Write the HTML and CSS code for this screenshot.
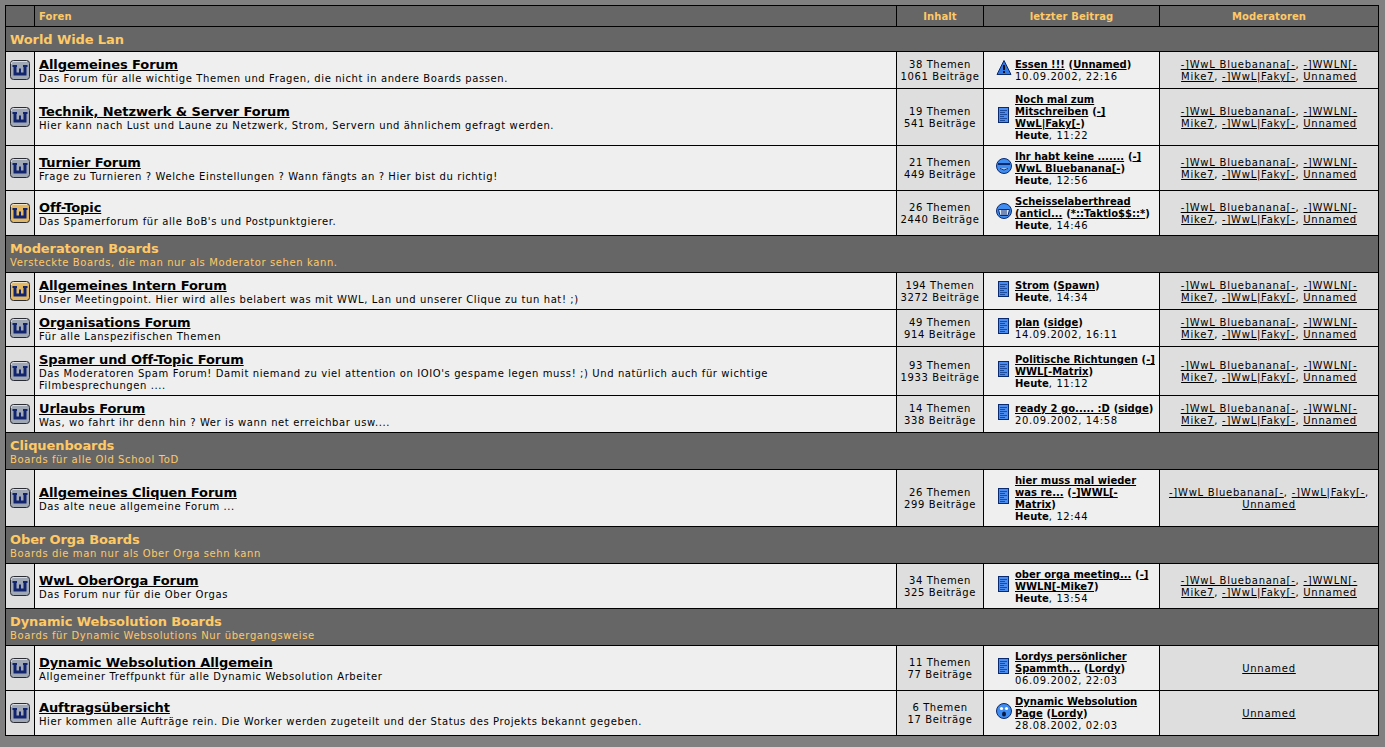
FILE: index.html
```html
<!DOCTYPE html>
<html lang="de">
<head>
  <meta charset="UTF-8" />
  <title>Foren</title>
  <meta name="viewport" content="width=device-width, initial-scale=1.0" />
  <link rel="stylesheet" href="styles.css">
</head>
<body>

  <svg class="sprites" width="0" height="0">
    <symbol id="forum-icon" viewBox="0 0 20 20">
      <rect x="0.5" y="0.5" width="19" height="19" rx="3" fill="currentColor" stroke="#2b2b33" />
      <path d="M1.5 4V2.5L3 1.5H17" fill="none" stroke="#fff" stroke-opacity=".6" />
      <path d="M2.5 5H7V7H6.5V12.5H9V8.5H11V12.5H13.5V7H13V5H17.5V7H16.5V15.5H3.5V7H2.5Z" fill="#12246e" />
    </symbol>
    <symbol id="post-doc" viewBox="-4 -1 18 18">
      <rect x="0.5" y="0.5" width="10" height="15" fill="#4a8cf0" stroke="#0a2a70" />
      <path d="M2 3.5H9M2 5.5H7M2 7.5H9M2 9.5H6M2 11.5H9M2 13.5H7" stroke="#1c4a9c" />
    </symbol>
    <symbol id="post-warn" viewBox="-1 0 18 18">
      <path d="M9 1.5L16 15.5H2Z" fill="#2f78e8" stroke="#0a2a70" stroke-linejoin="round" />
      <path d="M9 6V11" stroke="#111" stroke-width="2" />
      <rect x="8" y="12" width="2" height="2" fill="#111" />
    </symbol>
    <symbol id="post-sad" viewBox="-1 0 18 18">
      <circle cx="9" cy="9" r="7.5" fill="#3f8df0" stroke="#0a2a70" />
      <path d="M3 7H15" stroke="#0a2a70" stroke-width="2" />
      <path d="M5 11.5Q9 14.5 13 11.5" fill="#fff" stroke="#0a2a70" />
    </symbol>
    <symbol id="post-grin" viewBox="-1 0 18 18">
      <circle cx="9" cy="9" r="7.5" fill="#3f8df0" stroke="#0a2a70" />
      <path d="M3.5 7.5H14.5L13 13.5H5Z" fill="#dfe9f8" stroke="#0a2a70" />
      <path d="M7 7.5V13.5M9 7.5V13.5M11 7.5V13.5" stroke="#0a2a70" />
    </symbol>
    <symbol id="post-wow" viewBox="-1 0 18 18">
      <circle cx="9" cy="9" r="7.5" fill="#3f8df0" stroke="#0a2a70" />
      <circle cx="6.5" cy="6.5" r="1.6" fill="#fff" />
      <circle cx="11.5" cy="6.5" r="1.6" fill="#fff" />
      <ellipse cx="9" cy="12" rx="2" ry="2.6" fill="#0a1a40" />
    </symbol>
  </svg>

  <table class="board">
    <colgroup>
      <col class="col-icon" />
      <col class="col-forum" />
      <col class="col-count" />
      <col class="col-last" />
      <col />
    </colgroup>
    <thead>
      <tr>
        <th></th>
        <th class="left">Foren</th>
        <th>Inhalt</th>
        <th>letzter Beitrag</th>
        <th>Moderatoren</th>
      </tr>
    </thead>
    <tbody>
      <tr class="cat"><td colspan="5"><b>World Wide Lan</b></td></tr>

      <tr>
        <td class="icon"><svg class="ficon"><use href="#forum-icon" /></svg></td>
        <td class="forum"><a href="#">Allgemeines Forum</a><br />Das Forum für alle wichtige Themen und Fragen, die nicht in andere Boards passen.</td>
        <td class="count">38 Themen<br />1061 Beiträge</td>
        <td class="last"><div class="post"><svg class="picon"><use href="#post-warn" /></svg><div><a href="#"><b>Essen !!!</b></a> <b>(<a href="#">Unnamed</a>)</b><br />10.09.2002, 22:16</div></div></td>
        <td class="mods"><a href="#">-]WwL Bluebanana[-</a>, <a href="#">-]WWLN[-Mike7</a>, <a href="#">-]WwL|Faky[-</a>, <a href="#">Unnamed</a></td>
      </tr>
      <tr>
        <td class="icon"><svg class="ficon"><use href="#forum-icon" /></svg></td>
        <td class="forum"><a href="#">Technik, Netzwerk &amp; Server Forum</a><br />Hier kann nach Lust und Laune zu Netzwerk, Strom, Servern und ähnlichem gefragt werden.</td>
        <td class="count">19 Themen<br />541 Beiträge</td>
        <td class="last"><div class="post"><svg class="picon"><use href="#post-doc" /></svg><div><a href="#"><b>Noch mal zum Mitschreiben</b></a> <b>(<a href="#">-]<wbr />WwL|Faky[-</a>)</b><br /><b>Heute</b>, 11:22</div></div></td>
        <td class="mods"><a href="#">-]WwL Bluebanana[-</a>, <a href="#">-]WWLN[-Mike7</a>, <a href="#">-]WwL|Faky[-</a>, <a href="#">Unnamed</a></td>
      </tr>
      <tr>
        <td class="icon"><svg class="ficon"><use href="#forum-icon" /></svg></td>
        <td class="forum"><a href="#">Turnier Forum</a><br />Frage zu Turnieren ? Welche Einstellungen ? Wann fängts an ? Hier bist du richtig!</td>
        <td class="count">21 Themen<br />449 Beiträge</td>
        <td class="last"><div class="post"><svg class="picon"><use href="#post-sad" /></svg><div><a href="#"><b>Ihr habt keine .......</b></a> <b>(<a href="#">-]<wbr />WwL Bluebanana[-</a>)</b><br /><b>Heute</b>, 12:56</div></div></td>
        <td class="mods"><a href="#">-]WwL Bluebanana[-</a>, <a href="#">-]WWLN[-Mike7</a>, <a href="#">-]WwL|Faky[-</a>, <a href="#">Unnamed</a></td>
      </tr>
      <tr>
        <td class="icon"><svg class="ficon new"><use href="#forum-icon" /></svg></td>
        <td class="forum"><a href="#">Off-Topic</a><br />Das Spamerforum für alle BoB's und Postpunktgierer.</td>
        <td class="count">26 Themen<br />2440 Beiträge</td>
        <td class="last"><div class="post"><svg class="picon"><use href="#post-grin" /></svg><div><a href="#"><b>Scheisselaberthread (anticl...</b></a> <b>(<a href="#">*::Taktlo$$::*</a>)</b><br /><b>Heute</b>, 14:46</div></div></td>
        <td class="mods"><a href="#">-]WwL Bluebanana[-</a>, <a href="#">-]WWLN[-Mike7</a>, <a href="#">-]WwL|Faky[-</a>, <a href="#">Unnamed</a></td>
      </tr>

      <tr class="cat"><td colspan="5"><b>Moderatoren Boards</b><br />Versteckte Boards, die man nur als Moderator sehen kann.</td></tr>

      <tr>
        <td class="icon"><svg class="ficon new"><use href="#forum-icon" /></svg></td>
        <td class="forum"><a href="#">Allgemeines Intern Forum</a><br />Unser Meetingpoint. Hier wird alles belabert was mit WWL, Lan und unserer Clique zu tun hat! ;)</td>
        <td class="count">194 Themen<br />3272 Beiträge</td>
        <td class="last"><div class="post"><svg class="picon"><use href="#post-doc" /></svg><div><a href="#"><b>Strom</b></a> <b>(<a href="#">Spawn</a>)</b><br /><b>Heute</b>, 14:34</div></div></td>
        <td class="mods"><a href="#">-]WwL Bluebanana[-</a>, <a href="#">-]WWLN[-Mike7</a>, <a href="#">-]WwL|Faky[-</a>, <a href="#">Unnamed</a></td>
      </tr>
      <tr>
        <td class="icon"><svg class="ficon"><use href="#forum-icon" /></svg></td>
        <td class="forum"><a href="#">Organisations Forum</a><br />Für alle Lanspezifischen Themen</td>
        <td class="count">49 Themen<br />914 Beiträge</td>
        <td class="last"><div class="post"><svg class="picon"><use href="#post-doc" /></svg><div><a href="#"><b>plan</b></a> <b>(<a href="#">sidge</a>)</b><br />14.09.2002, 16:11</div></div></td>
        <td class="mods"><a href="#">-]WwL Bluebanana[-</a>, <a href="#">-]WWLN[-Mike7</a>, <a href="#">-]WwL|Faky[-</a>, <a href="#">Unnamed</a></td>
      </tr>
      <tr>
        <td class="icon"><svg class="ficon"><use href="#forum-icon" /></svg></td>
        <td class="forum"><a href="#">Spamer und Off-Topic Forum</a><br />Das Moderatoren Spam Forum! Damit niemand zu viel attention on IOIO's gespame legen muss! ;) Und natürlich auch für wichtige Filmbesprechungen ....</td>
        <td class="count">93 Themen<br />1933 Beiträge</td>
        <td class="last"><div class="post"><svg class="picon"><use href="#post-doc" /></svg><div><a href="#"><b>Politische Richtungen</b></a> <b>(<a href="#">-]<wbr />WWL[-Matrix</a>)</b><br /><b>Heute</b>, 11:12</div></div></td>
        <td class="mods"><a href="#">-]WwL Bluebanana[-</a>, <a href="#">-]WWLN[-Mike7</a>, <a href="#">-]WwL|Faky[-</a>, <a href="#">Unnamed</a></td>
      </tr>
      <tr>
        <td class="icon"><svg class="ficon"><use href="#forum-icon" /></svg></td>
        <td class="forum"><a href="#">Urlaubs Forum</a><br />Was, wo fahrt ihr denn hin ? Wer is wann net erreichbar usw....</td>
        <td class="count">14 Themen<br />338 Beiträge</td>
        <td class="last"><div class="post"><svg class="picon"><use href="#post-doc" /></svg><div><a href="#"><b>ready 2 go..... :D</b></a> <b>(<a href="#">sidge</a>)</b><br />20.09.2002, 14:58</div></div></td>
        <td class="mods"><a href="#">-]WwL Bluebanana[-</a>, <a href="#">-]WWLN[-Mike7</a>, <a href="#">-]WwL|Faky[-</a>, <a href="#">Unnamed</a></td>
      </tr>

      <tr class="cat"><td colspan="5"><b>Cliquenboards</b><br />Boards für alle Old School ToD</td></tr>

      <tr>
        <td class="icon"><svg class="ficon"><use href="#forum-icon" /></svg></td>
        <td class="forum"><a href="#">Allgemeines Cliquen Forum</a><br />Das alte neue allgemeine Forum ...</td>
        <td class="count">26 Themen<br />299 Beiträge</td>
        <td class="last"><div class="post"><svg class="picon"><use href="#post-doc" /></svg><div><a href="#"><b>hier muss mal wieder was re...</b></a> <b>(<a href="#">-]WWL[-Matrix</a>)</b><br /><b>Heute</b>, 12:44</div></div></td>
        <td class="mods"><a href="#">-]WwL Bluebanana[-</a>, <a href="#">-]WwL|Faky[-</a>, <a href="#">Unnamed</a></td>
      </tr>

      <tr class="cat"><td colspan="5"><b>Ober Orga Boards</b><br />Boards die man nur als Ober Orga sehn kann</td></tr>

      <tr>
        <td class="icon"><svg class="ficon"><use href="#forum-icon" /></svg></td>
        <td class="forum"><a href="#">WwL OberOrga Forum</a><br />Das Forum nur für die Ober Orgas</td>
        <td class="count">34 Themen<br />325 Beiträge</td>
        <td class="last"><div class="post"><svg class="picon"><use href="#post-doc" /></svg><div><a href="#"><b>ober orga meeting...</b></a> <b>(<a href="#">-]<wbr />WWLN[-Mike7</a>)</b><br /><b>Heute</b>, 13:54</div></div></td>
        <td class="mods"><a href="#">-]WwL Bluebanana[-</a>, <a href="#">-]WWLN[-Mike7</a>, <a href="#">-]WwL|Faky[-</a>, <a href="#">Unnamed</a></td>
      </tr>

      <tr class="cat"><td colspan="5"><b>Dynamic Websolution Boards</b><br />Boards für Dynamic Websolutions Nur übergangsweise</td></tr>

      <tr>
        <td class="icon"><svg class="ficon"><use href="#forum-icon" /></svg></td>
        <td class="forum"><a href="#">Dynamic Websolution Allgemein</a><br />Allgemeiner Treffpunkt für alle Dynamic Websolution Arbeiter</td>
        <td class="count">11 Themen<br />77 Beiträge</td>
        <td class="last"><div class="post"><svg class="picon"><use href="#post-doc" /></svg><div><a href="#"><b>Lordys persönlicher Spammth...</b></a> <b>(<a href="#">Lordy</a>)</b><br />06.09.2002, 22:03</div></div></td>
        <td class="mods"><a href="#">Unnamed</a></td>
      </tr>
      <tr>
        <td class="icon"><svg class="ficon"><use href="#forum-icon" /></svg></td>
        <td class="forum"><a href="#">Auftragsübersicht</a><br />Hier kommen alle Aufträge rein. Die Worker werden zugeteilt und der Status des Projekts bekannt gegeben.</td>
        <td class="count">6 Themen<br />17 Beiträge</td>
        <td class="last"><div class="post"><svg class="picon"><use href="#post-wow" /></svg><div><a href="#"><b>Dynamic Websolution Page</b></a> <b>(<a href="#">Lordy</a>)</b><br />28.08.2002, 02:03</div></div></td>
        <td class="mods"><a href="#">Unnamed</a></td>
      </tr>
    </tbody>
  </table>

</body>
</html>
```

FILE: styles.css
```css
:root {
  --page: #808080;
  --head: #666666;
  --light: #efefef;
  --dark: #dedede;
  --gold: #ffc966;
  --line: #000000;
}

body {
  margin: 5px 6px 0 5px;
  background: var(--page);
  color: #000;
  font-family: "DejaVu Sans", Verdana, sans-serif;
  font-size: 10px;
  line-height: 12px;
  letter-spacing: 0.6px;
}

a {
  color: #000;
}

b {
  letter-spacing: 0;
}

.sprites {
  display: block;
  height: 0;
}

.board {
  width: 100%;
  table-layout: fixed;
  border-collapse: collapse;
  border: 1px solid var(--line);
}

.col-icon { width: 29px; }
.col-forum { width: 862px; }
.col-count { width: 87px; }
.col-last { width: 176px; }

th, td {
  border: 1px solid var(--line);
  padding: 5px 4px 3px;
}

th {
  background: var(--head);
  color: var(--gold);
  font-weight: bold;
  letter-spacing: 0.1px;
  text-align: center;
}

th.left {
  text-align: left;
}

.cat td {
  background: var(--head);
  color: var(--gold);
}

.cat b {
  font-size: 13px;
  line-height: 16px;
  letter-spacing: -0.1px;
}

.icon {
  background: var(--dark);
  padding: 4px 0;
  text-align: center;
}

.ficon {
  display: block;
  width: 20px;
  height: 20px;
  margin: auto;
  color: #a0a8b6;
}

.ficon.new {
  color: #e2b865;
}

.forum {
  background: var(--light);
  padding-right: 20px;
}

.forum a {
  font-size: 13px;
  font-weight: bold;
  line-height: 16px;
  letter-spacing: -0.1px;
}

.count {
  background: var(--dark);
  padding-left: 0;
  padding-right: 0;
  text-align: center;
}

.last {
  background: var(--light);
}

.post {
  display: flex;
  align-items: center;
  gap: 3px;
  padding-left: 6px;
}

.picon {
  flex: none;
  width: 18px;
  height: 18px;
  margin-bottom: 6px;
}

.mods {
  background: var(--dark);
  padding-left: 8px;
  padding-right: 8px;
  letter-spacing: 0.75px;
  text-align: center;
}
```
